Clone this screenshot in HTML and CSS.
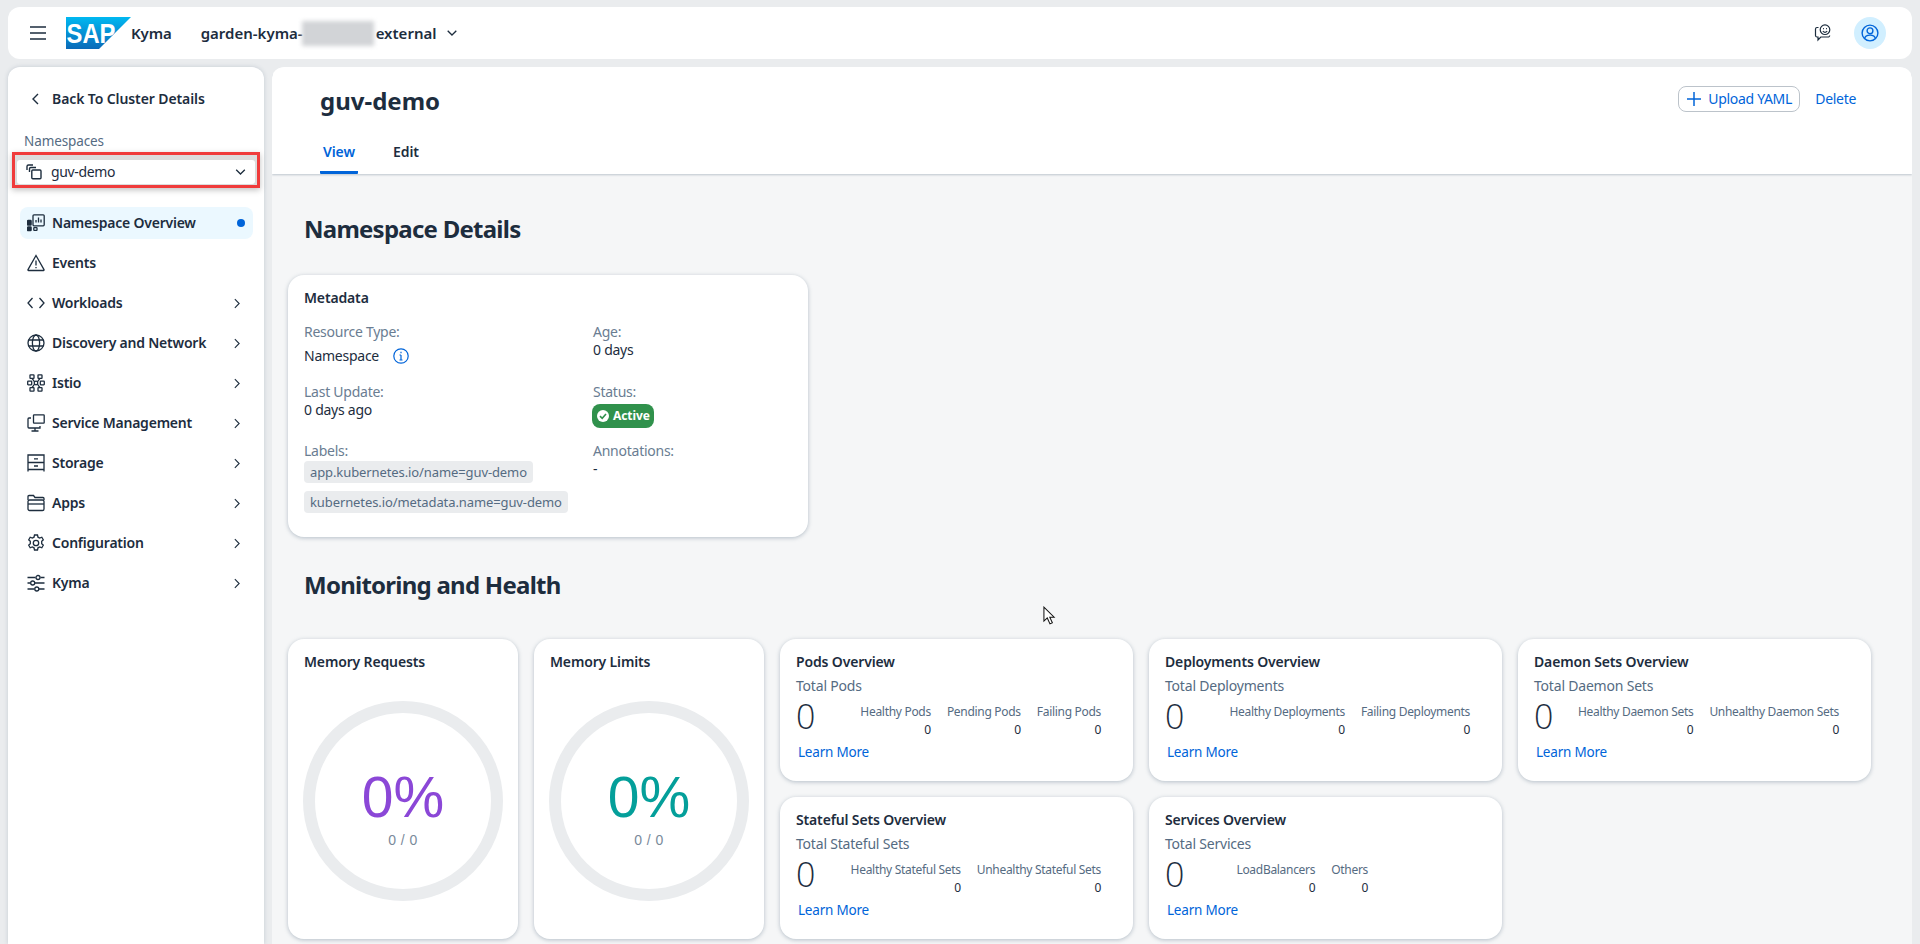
FILE: index.html
```html
<!DOCTYPE html>
<html lang="en">
<head>
<meta charset="utf-8">
<title>Kyma</title>
<link rel="stylesheet" href="styles.css">
</head>
<body>
<header class="topbar">
  <svg class="icon burger" viewBox="0 0 16 14"><path d="M0 1h16M0 7h16M0 13h16"/></svg>
  <svg class="logo" viewBox="0 0 65 32">
    <defs><linearGradient id="sapg" x1="0" y1="0" x2="0" y2="1"><stop offset="0" stop-color="#00b8f1"/><stop offset="1" stop-color="#0a6ab8"/></linearGradient></defs>
    <path d="M0 0H65L33 32H0Z" fill="url(#sapg)"/>
    <text x="0.5" y="26" class="logo-text" textLength="49" lengthAdjust="spacingAndGlyphs">SAP</text>
  </svg>
  <span class="product">Kyma</span>
  <span class="cluster">garden-kyma-<span class="blur"></span>external</span>
  <svg class="icon cluster-chev" viewBox="0 0 10 6"><path d="M.7.7 5 5 9.3.7"/></svg>
  <span class="spacer"></span>
  <svg class="icon feedback" viewBox="0 0 18 18"><path d="M4.5 3.5H3A1.6 1.6 0 0 0 1.5 5v6.5A1.6 1.6 0 0 0 3 13h1v3l2.8-3H14a1.6 1.6 0 0 0 1.7-1.5"/><circle cx="11" cy="5.7" r="4.8"/><path d="M8.8 7.2c1.2 1.2 3.2 1.2 4.4 0M9 4.6h.9M12.1 4.6h.9"/></svg>
  <span class="avatar"><svg class="icon avatar-icon" viewBox="0 0 18 18"><circle cx="9" cy="9" r="7.9"/><circle cx="9" cy="6.8" r="2.9"/><path d="M3.6 14.6c.4-2.3 2.2-3.5 5.4-3.5s5 1.2 5.4 3.5"/></svg></span>
</header>

<div class="shell">
  <aside class="sidebar">
    <div class="back"><svg class="icon chev-back" viewBox="0 0 7 12"><path d="M6 1 1 6l5 5"/></svg><span>Back To Cluster Details</span></div>
    <div class="ns-label">Namespaces</div>
    <div class="ns-frame">
      <div class="ns-select">
        <svg class="icon ns-icon" viewBox="0 0 16 16"><path d="M1 6V2.500A1.500 1.500 0 0 1 2.500 1H7M3.500 8V4.800A1.300 1.300 0 0 1 4.800 3.500H10"/><rect x="5.800" y="6" width="9.200" height="8.800" rx="1"/></svg>
        <span class="ns-value">guv-demo</span>
        <svg class="icon ns-chev" viewBox="0 0 10 6"><path d="M.7.7 5 5 9.3.7"/></svg>
      </div>
    </div>
    <nav class="nav">
      <a class="nav-item active">
        <svg class="icon nav-icon" viewBox="0 0 18 18"><rect x="6" y=".8" width="11.200" height="11" rx="1"/><path d="M9 8.500V6M11.500 8.500V3.500M14 8.500V5.500"/><rect class="fill" x=".5" y="6.500" width="3.600" height="4.600" rx=".6"/><rect class="fill" x=".5" y="13" width="3.600" height="3.600" rx=".6"/><rect x="6.800" y="13.600" width="3.200" height="2.800" rx=".5"/></svg>
        <span class="nav-text">Namespace Overview</span><span class="dot"></span>
      </a>
      <a class="nav-item">
        <svg class="icon nav-icon" viewBox="0 0 18 18"><path d="M9 1.500 17 15.600a.6.600 0 0 1-.5.900H1.500a.6.600 0 0 1-.5-.9Z"/><path d="M9 6.500v5M9 13v1.200"/></svg>
        <span class="nav-text">Events</span>
      </a>
      <a class="nav-item">
        <svg class="icon nav-icon" viewBox="0 0 18 18"><path d="M5.500 4 1 9l4.500 5M12.500 4 17 9l-4.500 5"/></svg>
        <span class="nav-text">Workloads</span><svg class="icon nav-chev" viewBox="0 0 7 12"><path d="M1 1l5 5-5 5"/></svg>
      </a>
      <a class="nav-item">
        <svg class="icon nav-icon" viewBox="0 0 18 18"><circle cx="9" cy="9" r="8"/><ellipse cx="9" cy="9" rx="3.600" ry="8"/><path d="M1.600 6h14.800M1.600 12h14.800"/></svg>
        <span class="nav-text">Discovery and Network</span><svg class="icon nav-chev" viewBox="0 0 7 12"><path d="M1 1l5 5-5 5"/></svg>
      </a>
      <a class="nav-item">
        <svg class="icon nav-icon" viewBox="0 0 18 18"><rect x="3" y=".8" width="4" height="3.600" rx=".5"/><rect x="11" y=".8" width="4" height="3.600" rx=".5"/><rect x=".7" y="7.200" width="4" height="3.600" rx=".5"/><rect x="13.300" y="7.200" width="4" height="3.600" rx=".5"/><rect x="3" y="13.600" width="4" height="3.600" rx=".5"/><rect x="11" y="13.600" width="4" height="3.600" rx=".5"/><circle cx="9" cy="9" r="1.800"/><path d="M5 4.400 7.600 7.800M13 4.400l-2.600 3.400M5 13.600l2.600-3.400M13 13.600l-2.600-3.400"/></svg>
        <span class="nav-text">Istio</span><svg class="icon nav-chev" viewBox="0 0 7 12"><path d="M1 1l5 5-5 5"/></svg>
      </a>
      <a class="nav-item">
        <svg class="icon nav-icon" viewBox="0 0 18 18"><path d="M4 4H2a1 1 0 0 0-1 1v8a1 1 0 0 0 1 1h11v-2M8 14v3M4.500 17h7"/><rect x="6.500" y=".8" width="10.700" height="8.400" rx=".6"/></svg>
        <span class="nav-text">Service Management</span><svg class="icon nav-chev" viewBox="0 0 7 12"><path d="M1 1l5 5-5 5"/></svg>
      </a>
      <a class="nav-item">
        <svg class="icon nav-icon" viewBox="0 0 18 18"><path d="M1 17.500V1h16v16.500M1 8.500h16M1 15.500h16M7 4.800h4M7 12h4"/></svg>
        <span class="nav-text">Storage</span><svg class="icon nav-chev" viewBox="0 0 7 12"><path d="M1 1l5 5-5 5"/></svg>
      </a>
      <a class="nav-item">
        <svg class="icon nav-icon" viewBox="0 0 18 18"><path d="M1 6V2.500A1 1 0 0 1 2 1.500h4.500L8 3.500h8a1 1 0 0 1 1 1V6"/><rect x="1" y="6" width="16" height="10.500" rx="1.600"/><path d="M1 10h16"/></svg>
        <span class="nav-text">Apps</span><svg class="icon nav-chev" viewBox="0 0 7 12"><path d="M1 1l5 5-5 5"/></svg>
      </a>
      <a class="nav-item">
        <svg class="icon nav-icon" viewBox="0 0 18 18"><path d="M7.500 1h3l.5 2.200 1.700.8 2.100-.8 1.500 2.600-1.600 1.500v2.400l1.600 1.500-1.500 2.600-2.100-.8-1.700.8-.5 2.200h-3l-.5-2.200-1.700-.8-2.100.8-1.500-2.600 1.600-1.500V7.300L1.700 5.800l1.500-2.600 2.100.8L7 3.200Z"/><circle cx="9" cy="9" r="2.700"/></svg>
        <span class="nav-text">Configuration</span><svg class="icon nav-chev" viewBox="0 0 7 12"><path d="M1 1l5 5-5 5"/></svg>
      </a>
      <a class="nav-item">
        <svg class="icon nav-icon" viewBox="0 0 18 18"><path d="M.5 3.500h8M13.500 3.500h4M.5 9h3M8 9h9.500M.5 15h7M12 15h5.500"/><circle cx="11" cy="3.500" r="2"/><circle cx="5.700" cy="9" r="2"/><circle cx="9.800" cy="15" r="2"/></svg>
        <span class="nav-text">Kyma</span><svg class="icon nav-chev" viewBox="0 0 7 12"><path d="M1 1l5 5-5 5"/></svg>
      </a>
    </nav>
  </aside>

  <main class="main">
    <section class="page-head">
      <div class="head-top">
        <h1 class="title">guv-demo</h1>
        <div class="actions">
          <button class="btn"><svg class="icon plus" viewBox="0 0 14 14"><path d="M7 0v14M0 7h14"/></svg>Upload YAML</button>
          <a class="link delete">Delete</a>
        </div>
      </div>
      <div class="tabs"><span class="tab current">View</span><span class="tab">Edit</span></div>
    </section>

    <section class="content">
      <h2 class="section-title first">Namespace Details</h2>
      <article class="card meta">
        <h3 class="card-title">Metadata</h3>
        <div class="meta-grid">
          <div class="meta-cell c1">
            <div class="m-label">Resource Type:</div>
            <div class="m-value typed">Namespace<svg class="icon info" viewBox="0 0 16 16"><circle cx="8" cy="8" r="7.200"/><path d="M8 7v5M6.500 12h3M6.500 7H8"/><path d="M8 3.800v1.400"/></svg></div>
          </div>
          <div class="meta-cell c1">
            <div class="m-label">Age:</div>
            <div class="m-value">0 days</div>
          </div>
          <div class="meta-cell c2">
            <div class="m-label">Last Update:</div>
            <div class="m-value">0 days ago</div>
          </div>
          <div class="meta-cell c2">
            <div class="m-label">Status:</div>
            <span class="badge"><svg class="badge-icon" viewBox="0 0 12 12"><circle cx="6" cy="6" r="6" fill="#fff"/><path d="M3 6.200 5.200 8.300 9 4" fill="none" stroke="#30914c" stroke-width="1.600"/></svg>Active</span>
          </div>
          <div class="meta-cell">
            <div class="m-label">Labels:</div>
            <div class="chips"><span class="chip">app.kubernetes.io/name=guv-demo</span><span class="chip">kubernetes.io/metadata.name=guv-demo</span></div>
          </div>
          <div class="meta-cell">
            <div class="m-label">Annotations:</div>
            <div class="m-value">-</div>
          </div>
        </div>
      </article>

      <h2 class="section-title second">Monitoring and Health</h2>
      <div class="health">
        <article class="card gauge-card">
          <h3 class="card-title">Memory Requests</h3>
          <div class="gauge"><div class="pct purple">0%</div><div class="frac">0 / 0</div></div>
        </article>
        <article class="card gauge-card">
          <h3 class="card-title">Memory Limits</h3>
          <div class="gauge"><div class="pct teal">0%</div><div class="frac">0 / 0</div></div>
        </article>
        <div class="stats">
          <article class="card stat">
            <h3 class="card-title">Pods Overview</h3>
            <div class="total-label">Total Pods</div>
            <div class="stat-row"><span class="big">0</span><div class="subs">
              <div class="sub"><div>Healthy Pods</div><div class="n">0</div></div>
              <div class="sub"><div>Pending Pods</div><div class="n">0</div></div>
              <div class="sub"><div>Failing Pods</div><div class="n">0</div></div>
            </div></div>
            <a class="link learn">Learn More</a>
          </article>
          <article class="card stat">
            <h3 class="card-title">Deployments Overview</h3>
            <div class="total-label">Total Deployments</div>
            <div class="stat-row"><span class="big">0</span><div class="subs">
              <div class="sub"><div>Healthy Deployments</div><div class="n">0</div></div>
              <div class="sub"><div>Failing Deployments</div><div class="n">0</div></div>
            </div></div>
            <a class="link learn">Learn More</a>
          </article>
          <article class="card stat">
            <h3 class="card-title">Daemon Sets Overview</h3>
            <div class="total-label">Total Daemon Sets</div>
            <div class="stat-row"><span class="big">0</span><div class="subs">
              <div class="sub"><div>Healthy Daemon Sets</div><div class="n">0</div></div>
              <div class="sub"><div>Unhealthy Daemon Sets</div><div class="n">0</div></div>
            </div></div>
            <a class="link learn">Learn More</a>
          </article>
          <article class="card stat">
            <h3 class="card-title">Stateful Sets Overview</h3>
            <div class="total-label">Total Stateful Sets</div>
            <div class="stat-row"><span class="big">0</span><div class="subs">
              <div class="sub"><div>Healthy Stateful Sets</div><div class="n">0</div></div>
              <div class="sub"><div>Unhealthy Stateful Sets</div><div class="n">0</div></div>
            </div></div>
            <a class="link learn">Learn More</a>
          </article>
          <article class="card stat">
            <h3 class="card-title">Services Overview</h3>
            <div class="total-label">Total Services</div>
            <div class="stat-row"><span class="big">0</span><div class="subs services">
              <div class="sub"><div>LoadBalancers</div><div class="n">0</div></div>
              <div class="sub"><div>Others</div><div class="n">0</div></div>
            </div></div>
            <a class="link learn">Learn More</a>
          </article>
        </div>
      </div>
    </section>
  </main>
</div>
<svg class="cursor" viewBox="0 0 14 20"><path d="M1 1v15l3.600-3.400L7.500 19l2.600-1.200-2.800-6H12Z" fill="#fff" stroke="#111" stroke-width="1.100"/></svg>
</body>
</html>
```
FILE: styles.css
```css
* { box-sizing: border-box; }
html, body { height: 944px; overflow: hidden; }
body {
  margin: 0;
  padding: 7px 8px 0;
  background: #eaecee;
  color: #1d2d3e;
  font-family: "Noto Sans", "Open Sans", sans-serif;
  font-size: 14px;
  line-height: 18px;
}
h1, h2, h3 { margin: 0; }
.icon { fill: none; stroke: #1d2d3e; stroke-width: 1.300; display: block; flex: none; }
.icon .fill { fill: #1d2d3e; }

.topbar {
  height: 52px;
  background: #fff;
  border-radius: 12px;
  display: flex;
  align-items: center;
  padding: 0 26px 0 22px;
}
.burger { width: 16px; height: 14px; stroke-width: 1.500; }
.logo { width: 65px; height: 32px; margin-left: 20px; flex: none; }
.logo-text { font-family: "Liberation Sans", sans-serif; font-weight: 700; font-size: 28px; fill: #fff; }
.product { font-size: 15px; font-weight: 600; letter-spacing: -.1px; }
.cluster { margin-left: 29px; font-size: 15px; font-weight: 600; display: flex; align-items: center; white-space: nowrap; }
.blur { width: 72px; height: 25px; background: #d2d4d7; filter: blur(2px); margin: 0 2px 0 -1px; }
.cluster-chev { width: 10px; height: 6px; margin-left: 11px; stroke-width: 1.300; }
.spacer { flex: 1; }
.feedback { width: 18px; height: 18px; margin-right: 22px; stroke-width: 1.200; }
.avatar { width: 32px; height: 32px; border-radius: 50%; background: #d1efff; display: flex; align-items: center; justify-content: center; }
.avatar-icon { width: 18px; height: 18px; stroke: #0064d9; stroke-width: 1.400; }

.shell { display: flex; gap: 8px; margin-top: 8px; height: 877px; }
.sidebar {
  width: 256px;
  flex: none;
  background: #fff;
  border-radius: 12px 12px 0 0;
  box-shadow: 0 0 4px rgba(85, 107, 130, .25);
  padding: 19px 4px 0;
}
.back { display: flex; align-items: center; height: 26px; padding-left: 20px; font-weight: 600; font-size: 14px; letter-spacing: -.1px; }
.chev-back { width: 7px; height: 12px; margin-right: 13px; stroke-width: 1.400; }
.ns-label { margin: 19px 0 0 12px; height: 20px; line-height: 20px; color: #556b82; font-size: 13.500px; letter-spacing: -.1px; }
.ns-frame { border: 3px solid #f03b3b; height: 36px; padding: 5px 2px 1px; box-shadow: 0 2px 6px rgba(0, 0, 0, .25); background: #dcdcdc; margin-top: 1px; }
.ns-select { height: 24px; background: #fff; border-radius: 3px; display: flex; align-items: center; padding: 0 9px 0 9px; }
.ns-icon { width: 16px; height: 16px; stroke-width: 1.400; }
.ns-value { margin-left: 9px; flex: 1; font-size: 14px; letter-spacing: -.35px; }
.ns-chev { width: 11px; height: 6px; stroke-width: 1.300; }

.nav { margin-top: 19px; padding: 0 7px 0 8px; display: flex; flex-direction: column; gap: 8px; }
.nav-item { height: 32px; display: flex; align-items: center; padding: 0 9px 0 7px; border-radius: 8px; }
.nav-item.active { background: #ebf8ff; }
.nav-icon { width: 18px; height: 18px; stroke-width: 1.300; }
.nav-text { margin-left: 7px; flex: 1; font-weight: 600; font-size: 14px; letter-spacing: -.22px; white-space: nowrap; }
.nav-chev { width: 6px; height: 11px; margin-right: 4px; stroke-width: 1.300; }
.dot { width: 8px; height: 8px; border-radius: 50%; background: #0064d9; margin-right: -1px; }

.main { flex: 1; background: #f5f6f7; border-radius: 12px 12px 0 0; overflow: hidden; }
.page-head { background: #fff; height: 107px; box-shadow: 0 1px 2px rgba(85, 107, 130, .35); position: relative; padding: 0 56px 0 48px; }
.head-top { display: flex; justify-content: space-between; height: 68px; padding-top: 18px; }
.title { font-size: 24px; line-height: 32px; font-weight: 700; }
.actions { display: flex; align-items: flex-start; gap: 15px; padding-top: 1px; }
.btn { width: 122px; height: 26px; background: #fff; border: 1px solid #bcc3ca; border-radius: 8px; color: #0064d9; font: 14px/24px "Noto Sans", sans-serif; letter-spacing: -.3px; display: flex; align-items: center; padding: 0 0 0 8px; white-space: nowrap; }
.plus { width: 14px; height: 14px; stroke: #0064d9; stroke-width: 1.500; margin-right: 7px; }
.link { color: #0064d9; }
.delete { line-height: 26px; letter-spacing: -.3px; }
.tabs { display: flex; }
.tab { height: 39px; width: 76px; padding: 8px 0 0 3px; font-weight: 600; font-size: 14px; letter-spacing: -.1px; }
.tab.current { color: #0064d9; width: 38px; margin-right: 32px; border-bottom: 3px solid #0064d9; border-radius: 0 0 1px 1px; }

.content { padding: 0 16px; }
.section-title { font-size: 24px; line-height: 32px; font-weight: 700; padding-left: 16px; letter-spacing: -.75px; }
.section-title.first { margin-top: 39px; }
.section-title.second { margin-top: 32px; }
.card { background: #fff; border-radius: 16px; box-shadow: 0 1px 4px rgba(85, 107, 130, .4); }
.card-title { font-size: 14px; line-height: 18px; font-weight: 600; letter-spacing: -.15px; }
.meta { width: 520px; height: 262px; margin-top: 30px; padding: 14px 16px 0; }
.meta-grid { display: grid; grid-template-columns: 289px 1fr; margin-top: 16px; font-size: 14px; letter-spacing: -.25px; }
.c1 { height: 60px; }
.c2 { height: 59px; }
.m-label { color: #6a7d92; height: 18px; }
.m-value { height: 18px; }
.typed { display: flex; align-items: center; margin-top: 6px; }
.info { width: 16px; height: 16px; margin-left: 14px; stroke: #0064d9; stroke-width: 1.200; }
.badge { display: inline-flex; align-items: center; width: 62px; height: 24px; margin: 3px 0 0 -1px; border-radius: 8px; background: #30914c; color: #fff; font-size: 12px; font-weight: 700; padding-left: 5px; letter-spacing: -.1px; }
.badge-icon { width: 12px; height: 12px; margin-right: 4px; }
.chips { display: flex; flex-direction: column; align-items: flex-start; gap: 8px; margin-top: 1px; }
.chip { background: #eaecee; border-radius: 4px; height: 22px; line-height: 22px; padding: 0 6px; color: #556b82; font-size: 13px; letter-spacing: -.1px; white-space: nowrap; }

.health { display: flex; gap: 16px; margin-top: 38px; align-items: flex-start; }
.gauge-card { width: 230px; height: 300px; padding: 14px 16px 0; flex: none; }
.gauge { width: 200px; height: 200px; margin: 30px 0 0 -1px; border-radius: 50%; border: 12px solid #eaecee; display: flex; flex-direction: column; align-items: center; padding-top: 52px; font-family: "Liberation Sans", sans-serif; }
.pct { font-size: 57px; line-height: 64px; }
.purple { color: #8b47d7; }
.teal { color: #049f9a; }
.frac { color: #7a8a9b; font-size: 14px; line-height: 16px; margin-top: 3px; letter-spacing: .5px; }
.stats { display: grid; grid-template-columns: repeat(3, 353px); grid-auto-rows: 142px; gap: 16px; }
.stat { padding: 14px 32px 0 16px; }
.total-label { color: #556b82; margin-top: 6px; letter-spacing: -.2px; font-size: 14px; }
.stat-row { display: flex; justify-content: space-between; height: 39px; margin-top: 3px; }
.big { font-size: 34px; line-height: 36px; font-weight: 300; font-family: "Open Sans", sans-serif; }
.subs { display: flex; gap: 16px; font-size: 12px; color: #556b82; text-align: right; letter-spacing: -.3px; padding-top: 5px; }
.subs.services { margin-right: 102px; }
.sub { line-height: 18px; white-space: nowrap; }
.n { color: #1d2d3e; }
.learn { display: block; margin: 6px 0 0 2px; font-size: 13.500px; letter-spacing: -.2px; }
.cursor { position: absolute; left: 1043px; top: 606px; width: 13px; height: 19px; }
```
